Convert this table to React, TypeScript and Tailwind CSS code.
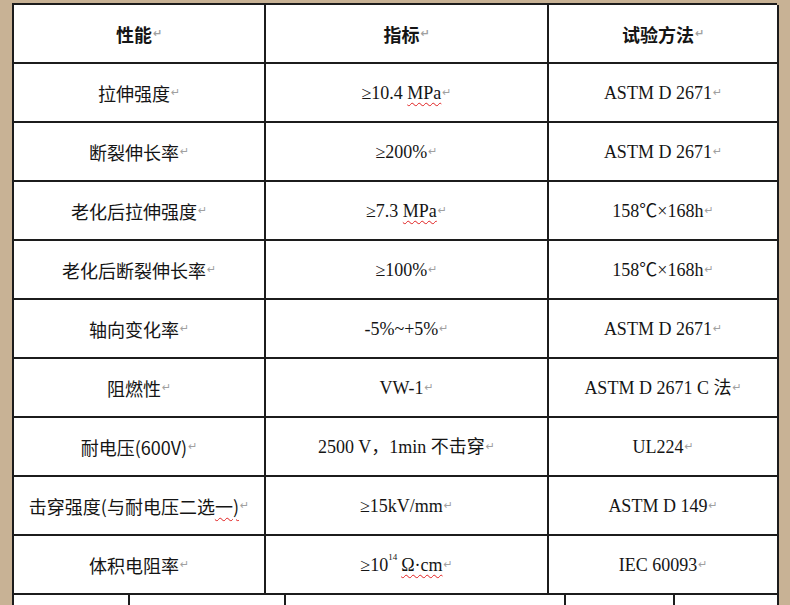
import React from 'react';

const serif = { fontFamily: '"Liberation Serif", "Noto Sans CJK SC", serif' };
const sans = { fontFamily: '"Noto Sans CJK SC", "Noto Sans", sans-serif' };

function Mark() {
  return (
    <span className="ml-[1px] text-[11px] text-[#a0a0a0]" style={{ fontFamily: '"DejaVu Sans", sans-serif' }}>
      ↵
    </span>
  );
}

function Wavy({ children }: { children: React.ReactNode }) {
  return (
    <span className="underline decoration-wavy decoration-[#e02020] decoration-1 underline-offset-[3px]">
      {children}
    </span>
  );
}

const rows: [React.ReactNode, React.ReactNode, React.ReactNode][] = [
  ['拉伸强度', <>≥10.4 <Wavy>MPa</Wavy></>, 'ASTM D 2671'],
  ['断裂伸长率', '≥200%', 'ASTM D 2671'],
  ['老化后拉伸强度', <>≥7.3 <Wavy>MPa</Wavy></>, '158℃×168h'],
  ['老化后断裂伸长率', '≥100%', '158℃×168h'],
  ['轴向变化率', '-5%~+5%', 'ASTM D 2671'],
  ['阻燃性', 'VW-1', 'ASTM D 2671 C 法'],
  ['耐电压(600V)', '2500 V，1min 不击穿', 'UL224'],
  [<>击穿强度(与耐电压二选<Wavy>一)</Wavy></>, <>≥15kV/mm </>, 'ASTM D 149'],
  [
    '体积电阻率',
    <>
      ≥10<sup className="text-[9px] align-[6px] mr-[4px]">14</sup>
      <Wavy>Ω·cm</Wavy>
    </>,
    'IEC 60093',
  ],
];

function Cell({ children, font, bold }: { children: React.ReactNode; font: React.CSSProperties; bold?: boolean }) {
  return (
    <div
      className={`flex h-[59px] items-center justify-center border-r-2 border-b-2 border-[#1c1c1c] text-[18px] leading-none text-[#151515] whitespace-nowrap ${bold ? 'font-bold' : ''}`}
      style={font}
    >
      <span>{children}</span>
      <Mark />
    </div>
  );
}

export default function App() {
  return (
    <div className="h-[605px] w-[790px] overflow-hidden bg-[#c8b295] pl-[12px] pt-[3px]">
      <div className="w-[765px] bg-white">
        <div className="grid grid-cols-[252px_283px_230px] border-t-2 border-l-2 border-[#1c1c1c]">
          <Cell font={sans} bold>性能</Cell>
          <Cell font={sans} bold>指标</Cell>
          <Cell font={sans} bold>试验方法</Cell>
          {rows.map((r, i) => (
            <React.Fragment key={i}>
              <Cell font={sans}>{r[0]}</Cell>
              <Cell font={serif}>{r[1]}</Cell>
              <Cell font={serif}>{r[2]}</Cell>
            </React.Fragment>
          ))}
        </div>
        <div className="grid h-[20px] grid-cols-[116px_156px_280px_109px_104px] border-l-2 border-[#1c1c1c]">
          <div className="border-r-2 border-[#1c1c1c]" />
          <div className="border-r-2 border-[#1c1c1c]" />
          <div className="border-r-2 border-[#1c1c1c]" />
          <div className="border-r-2 border-[#1c1c1c]" />
          <div className="border-r-2 border-[#1c1c1c]" />
        </div>
      </div>
    </div>
  );
}
